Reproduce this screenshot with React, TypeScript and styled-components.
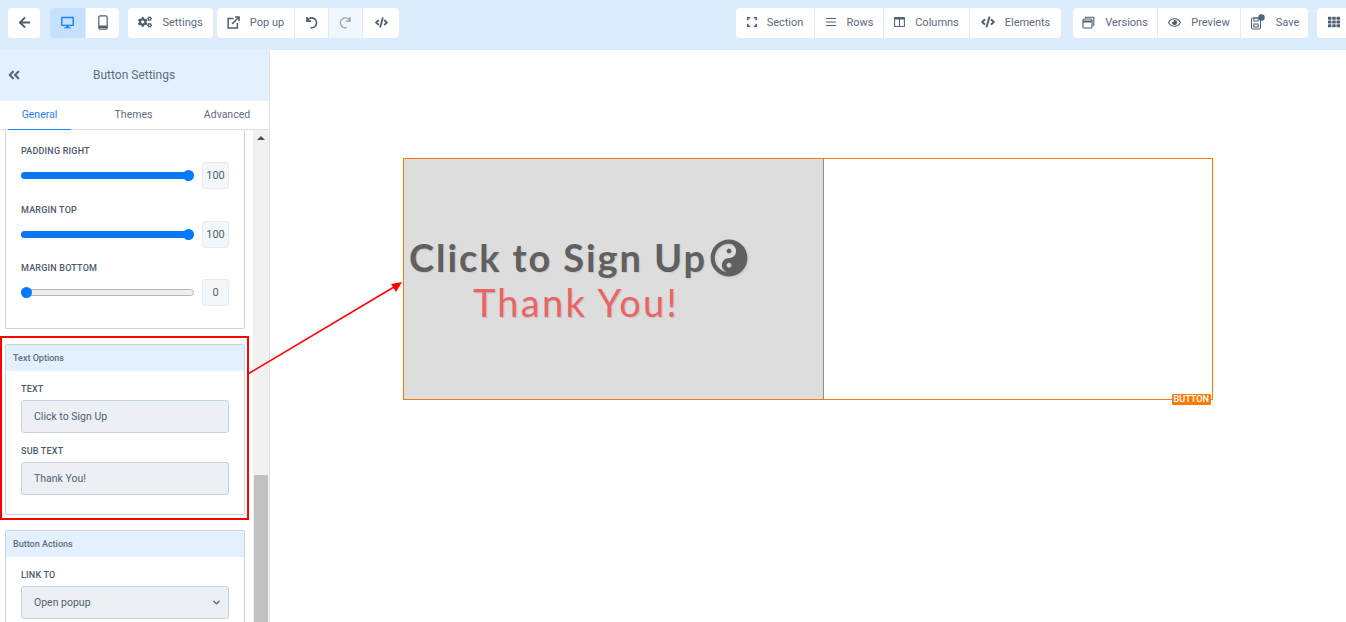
import { ReactNode } from 'react';
import styled, { createGlobalStyle } from 'styled-components';
import {
  FaArrowLeft,
  FaCode,
  FaCogs,
  FaDesktop,
  FaAngleDoubleLeft,
  FaRegEye,
  FaTh,
  FaYinYang,
} from 'react-icons/fa';
import { FiChevronDown } from 'react-icons/fi';
import { AlignJustify } from 'lucide-react';

const GlobalStyle = createGlobalStyle`
  html, body {
    margin: 0;
    padding: 0;
    overflow: hidden;
    background: #fff;
    font-family: Roboto, "Liberation Sans", sans-serif;
  }
  * { box-sizing: border-box; }
`;

const Page = styled.div`
  position: relative;
  width: 1346px;
  height: 622px;
  overflow: hidden;
  display: flex;
  flex-direction: column;
`;

const Toolbar = styled.header`
  height: 50px;
  flex: none;
  background: #dcecfd;
  display: flex;
  align-items: flex-start;
  padding: 8px 0 0 8px;
`;

const Group = styled.div<{ $left?: number }>`
  display: flex;
  height: 30px;
  flex: none;
  margin-left: ${(p) => p.$left ?? 0}px;
  gap: 1px;
  border-radius: 4px;
  overflow: hidden;
`;

const ToolButton = styled.div<{ $width: number; $state?: 'active' | 'disabled' }>`
  width: ${(p) => p.$width}px;
  height: 30px;
  flex: none;
  display: flex;
  align-items: center;
  justify-content: center;
  gap: 10px;
  padding-bottom: 2px;
  font-size: 11px;
  color: #5b6b7c;
  background: ${(p) =>
    p.$state === 'active' ? '#c6e1fd' : p.$state === 'disabled' ? '#f1f7fe' : '#fff'};
  svg {
    flex: none;
    color: ${(p) =>
      p.$state === 'active' ? '#1a84f0' : p.$state === 'disabled' ? '#9aa7b4' : '#4f5f70'};
  }
`;

const Body = styled.div`
  flex: 1;
  display: flex;
  min-height: 0;
`;

const Sidebar = styled.aside`
  width: 270px;
  flex: none;
  border-right: 1px solid #dfe3e8;
  display: flex;
  flex-direction: column;
  min-height: 0;
`;

const SidebarHeader = styled.div`
  height: 51px;
  flex: none;
  background: #e3f1fe;
  display: flex;
  align-items: center;
  padding-left: 7px;
  font-size: 12px;
  color: #5f6d7c;
  svg {
    color: #566b80;
    flex: none;
    margin-top: -2px;
  }
`;

const SidebarTitle = styled.div`
  margin-left: 72px;
  margin-top: -1px;
`;

const Tabs = styled.nav`
  height: 29px;
  flex: none;
  display: flex;
  border-bottom: 1px solid #dde1e6;
  font-size: 10.5px;
  color: #5f6d7c;
`;

const Tab = styled.div<{ $width: number; $active?: boolean }>`
  width: ${(p) => p.$width}px;
  margin-left: ${(p) => (p.$active ? 8 : 0)}px;
  height: 29px;
  display: flex;
  align-items: center;
  justify-content: center;
  padding-bottom: 2px;
  color: ${(p) => (p.$active ? '#1a84f0' : 'inherit')};
  border-bottom: ${(p) => (p.$active ? '1px solid #1a84f0' : 'none')};
`;

const ScrollArea = styled.div`
  flex: 1;
  display: flex;
  min-height: 0;
`;

const Panels = styled.div`
  width: 253px;
  flex: none;
  padding-left: 5px;
  overflow: hidden;
`;

const ScrollTrack = styled.div`
  width: 16px;
  flex: none;
  background: #f1f1f1;
  display: flex;
  flex-direction: column;
  align-items: center;
  padding-top: 6px;
`;

const ScrollArrow = styled.div`
  width: 0;
  height: 0;
  border-left: 4px solid transparent;
  border-right: 4px solid transparent;
  border-bottom: 4px solid #505050;
`;

const ScrollThumb = styled.div`
  width: 14px;
  height: 150px;
  margin-top: 335px;
  background: #c1c1c1;
`;

const Card = styled.section<{ $gap?: number; $open?: boolean }>`
  width: 240px;
  margin-top: ${(p) => p.$gap ?? 0}px;
  border: 1px solid #c9d5e2;
  border-top: ${(p) => (p.$open ? 'none' : '1px solid #c9d5e2')};
  border-radius: ${(p) => (p.$open ? '0 0 2px 2px' : '2px')};
`;

const CardHeader = styled.div`
  height: 26px;
  background: #e3f1fe;
  display: flex;
  align-items: center;
  padding-left: 7px;
  font-size: 9px;
  font-weight: 500;
  color: #5f6d7c;
`;

const CardBody = styled.div<{ $top: number; $bottom: number }>`
  padding: ${(p) => p.$top}px 15px ${(p) => p.$bottom}px 15px;
`;

const Label = styled.div`
  font-size: 9px;
  line-height: 12px;
  font-weight: 500;
  letter-spacing: 0.2px;
  color: #4b5a6a;
`;

const SliderRow = styled.div<{ $after: number }>`
  display: flex;
  align-items: center;
  height: 27px;
  margin: 5px 0 ${(p) => p.$after}px;
`;

const Track = styled.div`
  position: relative;
  width: 173px;
  height: 7px;
  flex: none;
  border-radius: 4px;
  background: #eee;
  border: 1px solid #b5b5b5;
`;

const Fill = styled.div`
  position: absolute;
  left: -1px;
  top: -1px;
  height: 7px;
  border-radius: 4px;
  background: #0a78f5;
`;

const Thumb = styled.div`
  position: absolute;
  top: -3px;
  width: 11px;
  height: 11px;
  border-radius: 50%;
  background: #007bff;
`;

const ValueBox = styled.div`
  width: 27px;
  height: 27px;
  margin-left: 8px;
  flex: none;
  display: flex;
  align-items: center;
  justify-content: center;
  font-size: 11px;
  color: #4f5f70;
  background: #f3f7fa;
  border: 1px solid #e6ebf0;
  border-radius: 3px;
`;

const Field = styled.div<{ $after?: number }>`
  width: 208px;
  height: 33px;
  margin: 5px 0 ${(p) => p.$after ?? 0}px;
  display: flex;
  align-items: center;
  justify-content: space-between;
  padding: 0 6px 0 12px;
  font-size: 10.5px;
  color: #4f5f70;
  background: #ecf0f5;
  border: 1px solid #c5d2e0;
  border-radius: 3px;
`;

const Canvas = styled.main`
  flex: 1;
  min-width: 0;
  padding: 108px 0 0 133px;
  background: #fff;
`;

const Block = styled.div`
  position: relative;
  width: 810px;
  height: 242px;
  display: flex;
  border: 1px solid #fb7a08;
`;

const ButtonFace = styled.div`
  width: 420px;
  height: 240px;
  flex: none;
  background: #dddddd;
  border-right: 1px solid #8f8f8f;
  padding-top: 73px;
  font-family: Lato, "Liberation Sans", sans-serif;
`;

const MainText = styled.div`
  display: flex;
  align-items: center;
  padding-left: 5px;
  height: 50px;
  font-size: 38px;
  font-weight: 700;
  letter-spacing: 1.9px;
  white-space: nowrap;
  color: #606060;
  text-shadow: 1px 1px 1px rgba(0, 0, 0, 0.1);
  svg {
    margin: 2px 0 0 3px;
    flex: none;
    filter: drop-shadow(1px 1px 1px rgba(0, 0, 0, 0.1));
  }
`;

const SubText = styled.div`
  padding-left: 69px;
  height: 46px;
  line-height: 40px;
  font-size: 38px;
  letter-spacing: 2.25px;
  white-space: nowrap;
  color: #e96464;
  text-shadow: 1px 1px 1px rgba(0, 0, 0, 0.12);
`;

const Badge = styled.div`
  position: absolute;
  right: 1px;
  bottom: -6px;
  height: 11px;
  padding: 0 2px;
  border-radius: 1px;
  background: #fb7a08;
  color: #fff;
  font-size: 9.1px;
  font-weight: 500;
  line-height: 11px;
`;

const Highlight = styled.div`
  position: absolute;
  left: 0;
  top: 336px;
  width: 249px;
  height: 184px;
  border: 2px solid #ff0000;
  pointer-events: none;
`;

const ArrowLayer = styled.svg`
  position: absolute;
  left: 0;
  top: 0;
  pointer-events: none;
`;

const MobileIcon = () => (
  <svg width="10" height="15" viewBox="0 0 10 15" fill="none" stroke="currentColor" strokeWidth="1.2">
    <rect x="0.8" y="0.8" width="8.4" height="13.4" rx="1.5" />
    <path d="M1 11.8h8" strokeWidth="2.4" />
  </svg>
);

const PopupIcon = () => (
  <svg width="13" height="13" viewBox="0 0 14 14" fill="none" stroke="currentColor" strokeWidth="1.6">
    <path d="M7 2.8H1.2v10h10V7.5" />
    <path d="M5.5 8.5 12.2 1.8M8.6 1h4.4v4.4" />
  </svg>
);

const UndoIcon = () => (
  <svg width="13" height="13" viewBox="0 0 13 13" fill="none" stroke="currentColor" strokeWidth="1.7">
    <path d="M2 1v4.2h4.2" />
    <path d="M2 5.2A4.9 4.9 0 1 1 5.5 11.6" />
  </svg>
);

const RedoIcon = () => (
  <svg width="13" height="13" viewBox="0 0 13 13" fill="none" stroke="currentColor" strokeWidth="1.5">
    <path d="M11 1v4.2H6.8" />
    <path d="M11 5.2A4.9 4.9 0 1 0 7.5 11.6" />
  </svg>
);

const SectionIcon = () => (
  <svg width="10" height="10" viewBox="0 0 10 10" fill="none" stroke="currentColor" strokeWidth="1.5">
    <path d="M.8 3.2V.8h2.4M6.8.8h2.4v2.4M9.2 6.8v2.4H6.8M3.2 9.2H.8V6.8" />
  </svg>
);

const ColumnsIcon = () => (
  <svg width="11" height="10" viewBox="0 0 11 10" fill="none" stroke="currentColor">
    <rect x="0.6" y="0.6" width="9.8" height="8.8" />
    <path d="M0.6 1.6h9.8" strokeWidth="2" />
    <path d="M5.5 1v8.4" />
  </svg>
);

const VersionsIcon = () => (
  <svg width="13" height="13" viewBox="0 0 13 13" fill="none" stroke="#4f5f70" strokeWidth="1.1">
    <path d="M3.5 2.5V1.2h8.3v8h-1.5" />
    <rect x="1" y="3" width="9" height="9" rx="1" />
    <path d="M1 5.5h9" strokeWidth="2" />
  </svg>
);

const SaveIcon = () => (
  <svg width="16" height="16" viewBox="0 0 16 16" fill="none" stroke="#4f5f70" strokeWidth="1">
    <rect x="1.5" y="4" width="9" height="11" rx="0.8" />
    <rect x="3.8" y="4" width="4.4" height="3" />
    <rect x="3.8" y="10" width="4.4" height="3" />
    <circle cx="11.5" cy="3.5" r="3.2" fill="#4f6478" stroke="none" />
  </svg>
);

const Slider = ({ percent, after }: { percent: number; after: number }) => (
  <SliderRow $after={after}>
    <Track>
      <Fill style={{ width: `${percent}%` }} />
      <Thumb style={{ left: percent === 0 ? -1 : `calc(${percent}% - 10px)` }} />
    </Track>
    <ValueBox>{percent}</ValueBox>
  </SliderRow>
);

const Tool = ({
  width,
  icon,
  label,
  state,
}: {
  width: number;
  icon: ReactNode;
  label?: string;
  state?: 'active' | 'disabled';
}) => (
  <ToolButton $width={width} $state={state}>
    {icon}
    {label && <span>{label}</span>}
  </ToolButton>
);

const App = () => (
  <Page>
    <GlobalStyle />
    <Toolbar>
      <Group>
        <Tool width={32} icon={<FaArrowLeft size={13} />} />
      </Group>
      <Group $left={10}>
        <Tool width={35} state="active" icon={<FaDesktop size={13} />} />
        <Tool width={33} icon={<MobileIcon />} />
      </Group>
      <Group $left={9}>
        <Tool width={85} icon={<FaCogs size={14} />} label="Settings" />
      </Group>
      <Group $left={4}>
        <Tool width={77} icon={<PopupIcon />} label="Pop up" />
        <Tool width={33} icon={<UndoIcon />} />
        <Tool width={33} state="disabled" icon={<RedoIcon />} />
        <Tool width={36} icon={<FaCode size={13} />} />
      </Group>
      <Group $left={337}>
        <Tool width={78} icon={<SectionIcon />} label="Section" />
        <Tool width={68} icon={<AlignJustify size={12} />} label="Rows" />
        <Tool width={85} icon={<ColumnsIcon />} label="Columns" />
        <Tool width={91} icon={<FaCode size={14} />} label="Elements" />
      </Group>
      <Group $left={12}>
        <Tool width={84} icon={<VersionsIcon />} label="Versions" />
        <Tool width={82} icon={<FaRegEye size={13} />} label="Preview" />
        <Tool width={67} icon={<SaveIcon />} label="Save" />
      </Group>
      <Group $left={9}>
        <Tool width={34} icon={<FaTh size={12} />} />
      </Group>
    </Toolbar>
    <Body>
      <Sidebar>
        <SidebarHeader>
          <FaAngleDoubleLeft size={14} />
          <SidebarTitle>Button Settings</SidebarTitle>
        </SidebarHeader>
        <Tabs>
          <Tab $width={63} $active>General</Tab>
          <Tab $width={125}>Themes</Tab>
          <Tab $width={62}>Advanced</Tab>
        </Tabs>
        <ScrollArea>
          <Panels>
            <Card $open>
              <CardBody $top={15} $bottom={22}>
                <Label>PADDING RIGHT</Label>
                <Slider percent={100} after={15} />
                <Label>MARGIN TOP</Label>
                <Slider percent={100} after={14} />
                <Label>MARGIN BOTTOM</Label>
                <Slider percent={0} after={0} />
              </CardBody>
            </Card>
            <Card $gap={15}>
              <CardHeader>Text Options</CardHeader>
              <CardBody $top={12} $bottom={19}>
                <Label>TEXT</Label>
                <Field $after={12}>Click to Sign Up</Field>
                <Label>SUB TEXT</Label>
                <Field>Thank You!</Field>
              </CardBody>
            </Card>
            <Card $gap={15}>
              <CardHeader>Button Actions</CardHeader>
              <CardBody $top={12} $bottom={20}>
                <Label>LINK TO</Label>
                <Field>
                  Open popup
                  <FiChevronDown size={11} strokeWidth={3} />
                </Field>
              </CardBody>
            </Card>
          </Panels>
          <ScrollTrack>
            <ScrollArrow />
            <ScrollThumb />
          </ScrollTrack>
        </ScrollArea>
      </Sidebar>
      <Canvas>
        <Block>
          <ButtonFace>
            <MainText>
              Click to Sign Up
              <FaYinYang size={38} />
            </MainText>
            <SubText>Thank You!</SubText>
          </ButtonFace>
          <Badge>BUTTON</Badge>
        </Block>
      </Canvas>
    </Body>
    <Highlight />
    <ArrowLayer width="1346" height="622">
      <line x1="248" y1="374" x2="394" y2="287" stroke="#ff0000" strokeWidth="1.5" />
      <polygon points="402,282 396,292 391,284" fill="#ff0000" />
    </ArrowLayer>
  </Page>
);

export default App;
